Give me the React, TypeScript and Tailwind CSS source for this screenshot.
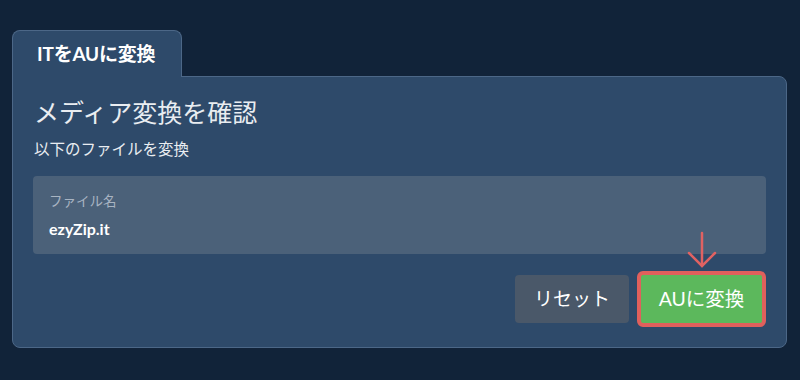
import React from "react";

const font = { fontFamily: 'Lato, "Noto Sans CJK JP", sans-serif' };

const App = () => {
  return (
    <div className="w-[800px] h-[380px] bg-[#112339] pt-[30px] pl-[12px] pr-[13px]" style={font}>
      {/* TAB */}
      <div className="relative z-10 -mb-px w-[170px] h-[47px] flex items-center pl-[24px] bg-[#2e4a6a] border border-b-0 border-[#4c6787] rounded-t-lg">
        <span className="text-[19px] font-bold text-white tracking-[-0.2px]">ITをAUに変換</span>
      </div>

      {/* PANEL */}
      <div className="h-[272px] bg-[#2e4a6a] border border-[#4c6787] rounded-b-lg rounded-tr-lg px-5 pt-[19px] pb-5">
        <h1 className="text-[25px] leading-8 text-[#e9edf1] pl-px">メディア変換を確認</h1>
        <p className="mt-[11px] text-[15.5px] leading-5 text-[#e9edf1] pl-px">以下のファイルを変換</p>

        <div className="mt-[17px] h-[78px] rounded bg-[#4b6179] px-4 pt-4">
          <div className="text-[13.5px] leading-[18px] text-[#a8b4c2]">ファイル名</div>
          <div className="mt-[9px] text-[16px] leading-5 font-bold text-white">ezyZip.it</div>
        </div>

        <div className="mt-[17px] flex justify-end items-center gap-2">
          <button className="w-[114px] h-[48px] rounded bg-[#4a5869] text-[19px] text-white">
            リセット
          </button>
          <div className="relative">
            <svg
              className="absolute left-1/2 -translate-x-1/2 -top-[40px]"
              width="32"
              height="38"
              viewBox="0 0 32 38"
              fill="none"
              stroke="#e06262"
              strokeWidth="2.5"
              strokeLinecap="round"
            >
              <path d="M16 2 V35" />
              <path d="M3 22 L16 35 L29 22" />
            </svg>
            <button className="w-[129px] h-[56px] rounded-md border-4 border-[#e0605c] bg-[#5cb85c] text-[19.5px] text-white">
              AUに変換
            </button>
          </div>
        </div>
      </div>
    </div>
  );
};

export default App;
